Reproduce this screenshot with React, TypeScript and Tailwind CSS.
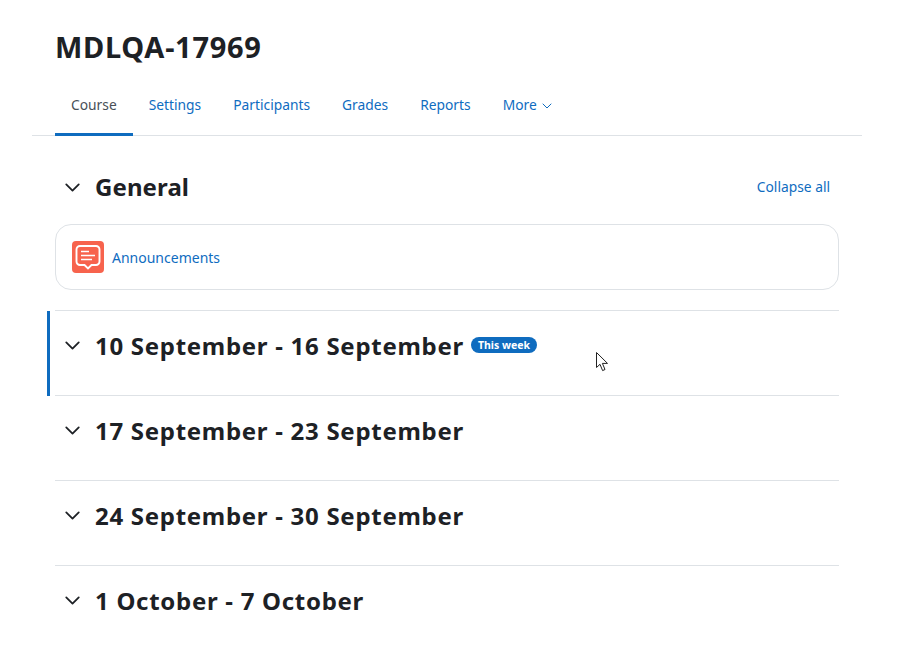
import { ChevronDown } from "lucide-react";

const tabs = ["Course", "Settings", "Participants", "Grades", "Reports"];

const weeks = [
  { title: "10 September - 16 September", current: true },
  { title: "17 September - 23 September", current: false },
  { title: "24 September - 30 September", current: false },
  { title: "1 October - 7 October", current: false },
];

function Tab({ label, active }: { label: string; active?: boolean }) {
  return (
    <a
      className={
        active
          ? "flex h-[63px] items-center border-b-[3px] border-[#0f6cbf] px-4 pt-1 text-[#495057]"
          : "flex h-[63px] items-center border-b-[3px] border-transparent px-4 pt-1 text-[#0f6cbf]"
      }
    >
      {label}
    </a>
  );
}

function CursorIcon() {
  return (
    <svg className="absolute left-[596px] top-[352px]" width="14" height="20" viewBox="0 0 14 20">
      <path
        d="M0.5 0.5V15.5L4 12.3L6.6 18.6L9 17.5L6.4 11.4H11.5Z"
        fill="#fff"
        stroke="#222"
        strokeWidth="1"
        strokeLinejoin="miter"
      />
    </svg>
  );
}

function WeekSection({ title, current }: { title: string; current: boolean }) {
  return (
    <section className="relative h-[85px] border-t border-[#dee2e6]">
      {current && <div className="absolute -left-2 top-0 h-[85px] w-[3px] bg-[#0f6cbf]" />}
      <div className="flex h-[69px] items-center">
        <ChevronDown className="ml-[5px] size-[25px] text-[#1d2125]" strokeWidth={1.7} />
        <h3 className="ml-[10px] text-[24px] font-bold leading-[32px] tracking-[0.71px] text-[#1d2125]">{title}</h3>
        {current && (
          <span className="ml-[7px] -mt-[2px] rounded-full bg-[#0f6cbf] px-[7px] text-[10.5px] font-bold leading-[16px] text-white">
            This week
          </span>
        )}
      </div>
    </section>
  );
}

export default function App() {
  return (
    <div className="relative h-[650px] w-[905px] overflow-hidden bg-white font-['Noto_Sans',sans-serif] text-[13.8px]">
      <div className="ml-8 w-[830px] border-b border-[#dee2e6] pl-[23px]">
        <h1 className="pt-[25px] text-[29px] font-bold leading-[44px] tracking-[0.7px] text-[#1d2125]">MDLQA-17969</h1>
        <nav className="mt-1 -mb-px flex">
          {tabs.map((tab) => (
            <Tab key={tab} label={tab} active={tab === "Course"} />
          ))}
          <a className="flex h-[63px] items-center border-b-[3px] border-transparent px-4 pt-1 text-[#0f6cbf]">
            More
            <ChevronDown className="ml-0.5 mt-[1px] size-4" strokeWidth={1.5} />
          </a>
        </nav>
      </div>

      <main className="ml-[55px] w-[784px]">
        <div className="flex h-[88px] items-center pb-[2px] pr-[9px] pt-[16px]">
          <ChevronDown className="ml-[5px] size-[25px] text-[#1d2125]" strokeWidth={1.7} />
          <h2 className="ml-[10px] text-[24px] font-bold leading-[32px] tracking-[0.1px] text-[#1d2125]">General</h2>
          <a className="ml-auto text-[#0f6cbf]">Collapse all</a>
        </div>
        <div className="flex h-[66px] items-center rounded-[16px] border border-[#dee2e6] pl-4">
          <svg width="32" height="32" viewBox="0 0 32 32" className="shrink-0">
            <rect width="32" height="32" rx="4" fill="#f7634d" />
            <path
              d="M8 5h16a3.500 3.500 0 0 1 3.500 3.500v12a3.500 3.500 0 0 1-3.500 3.500h-4.500L16 27.500 12.500 24H8a3.500 3.500 0 0 1-3.500-3.500v-12A3.500 3.500 0 0 1 8 5Z"
              fill="none"
              stroke="#fff"
              strokeWidth="1.9"
            />
            <path d="M9 10.500h8M9 14.500h14M9 18.500h11" stroke="#fff" strokeWidth="1.6" />
          </svg>
          <a className="ml-2 text-[14px] text-[#0f6cbf]">Announcements</a>
        </div>
        <div className="mt-5">
          {weeks.map((week) => (
            <WeekSection key={week.title} title={week.title} current={week.current} />
          ))}
        </div>
      </main>
      <CursorIcon />
    </div>
  );
}
